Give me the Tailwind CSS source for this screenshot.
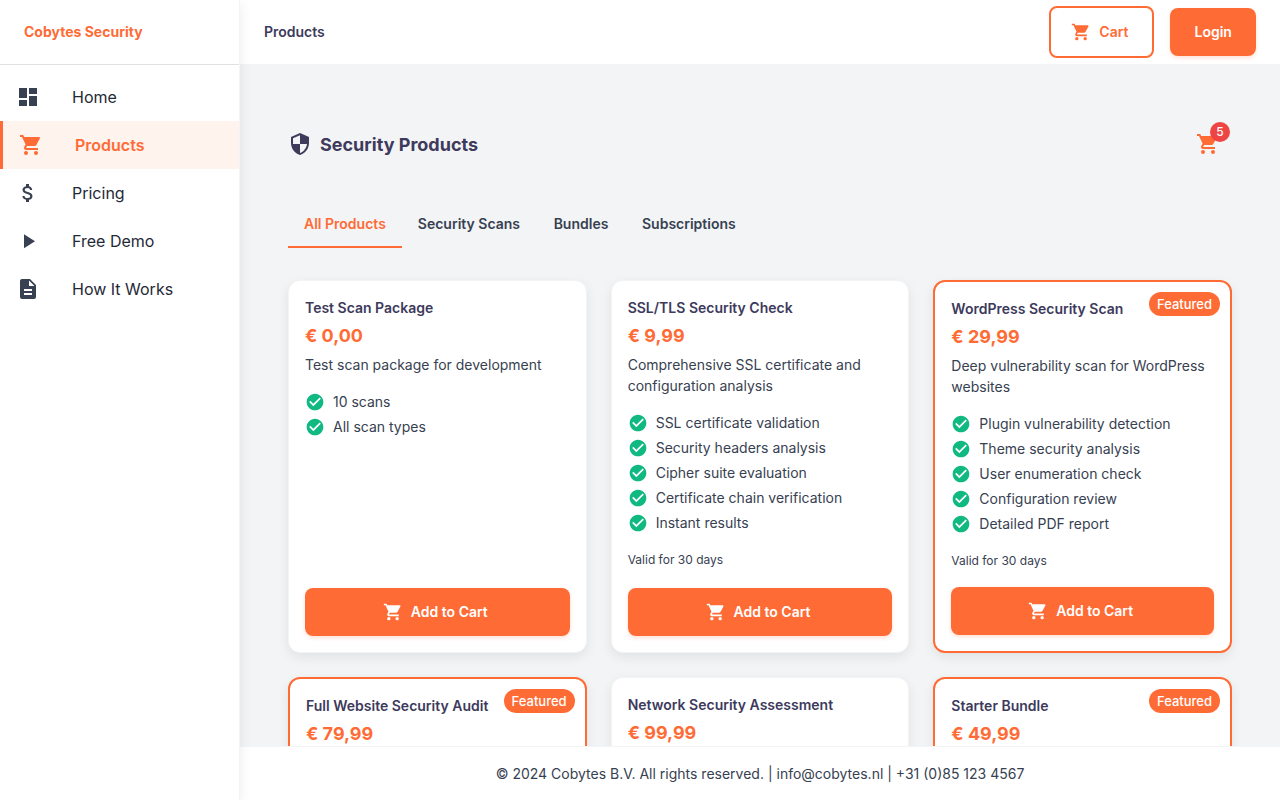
<!DOCTYPE html>
<html lang="en">
<head>
<meta charset="utf-8">
<title>Products - Cobytes Security</title>
<script src="https://cdn.jsdelivr.net/npm/@tailwindcss/browser@4"></script>
</head>
<body class="h-screen w-screen overflow-hidden bg-[#f3f4f6] font-[Inter,sans-serif] text-sm leading-[21px] text-[#374151] antialiased">
<svg class="hidden">
  <symbol id="cart" viewBox="0 0 24 24"><path d="M17 18c-1.11 0-2 .89-2 2a2 2 0 0 0 2 2 2 2 0 0 0 2-2 2 2 0 0 0-2-2M1 2v2h2l3.6 7.59-1.36 2.45c-.15.28-.24.61-.24.96a2 2 0 0 0 2 2h12v-2H7.42a.25.25 0 0 1-.25-.25c0-.05.01-.09.03-.12L8.1 13h7.45c.75 0 1.41-.42 1.75-1.03l3.58-6.47c.07-.16.12-.33.12-.5a1 1 0 0 0-1-1H5.21l-.94-2M7 18c-1.11 0-2 .89-2 2a2 2 0 0 0 2 2 2 2 0 0 0 2-2 2 2 0 0 0-2-2z"/></symbol>
  <symbol id="check" viewBox="0 0 24 24"><path d="M12 2C6.5 2 2 6.5 2 12s4.500 10 10 10 10-4.500 10-10S17.500 2 12 2m-2 15-5-5 1.410-1.410L10 14.170l7.590-7.590L19 8z"/></symbol>
</svg>
<div class="flex h-full">
  <aside class="relative z-10 flex w-60 shrink-0 flex-col border-r border-[#f3f4f6] bg-white shadow-[0_4px_12px_rgba(0,0,0,0.08)]">
    <div class="flex h-[65px] shrink-0 items-center border-b border-[#e0e0e0] px-6 leading-5 font-bold text-[#ff6b35]"><span class="-mt-px">Cobytes Security</span></div>
    <nav class="flex flex-col pt-2 text-base leading-6 text-[#1f2937]">
      <a class="flex h-12 items-center gap-8 px-4"><svg class="size-6 fill-[#374151]" viewBox="0 0 24 24"><path d="M13 3v6h8V3m-8 18h8V11h-8M3 21h8v-6H3m0-2h8V3H3z"/></svg>Home</a>
      <a class="flex h-12 items-center gap-8 border-l-3 border-[#ff6b35] bg-[#fff3ee] px-4 font-semibold text-[#ff6b35]"><svg class="size-6 fill-current"><use href="#cart"/></svg>Products</a>
      <a class="flex h-12 items-center gap-8 px-4"><svg class="size-6 fill-[#374151]" viewBox="0 0 24 24"><path d="M11.800 10.900c-2.270-.590-3-1.200-3-2.150 0-1.090 1.010-1.850 2.700-1.850 1.780 0 2.440.850 2.500 2.100h2.210c-.070-1.720-1.120-3.300-3.210-3.810V3h-3v2.160c-1.940.420-3.500 1.680-3.500 3.610 0 2.310 1.910 3.460 4.700 4.130 2.500.600 3 1.480 3 2.410 0 .690-.490 1.790-2.700 1.790-2.060 0-2.870-.920-2.980-2.100h-2.200c.120 2.190 1.760 3.420 3.680 3.830V21h3v-2.150c1.950-.370 3.500-1.500 3.500-3.550 0-2.840-2.430-3.810-4.700-4.400"/></svg>Pricing</a>
      <a class="flex h-12 items-center gap-8 px-4"><svg class="size-6 fill-[#374151]" viewBox="0 0 24 24"><path d="M8 5.140v14l11-7z"/></svg>Free Demo</a>
      <a class="flex h-12 items-center gap-8 px-4"><svg class="size-6 fill-[#374151]" viewBox="0 0 24 24"><path d="M13 9h5.500L13 3.500zM6 2h8l6 6v12a2 2 0 0 1-2 2H6a2 2 0 0 1-2-2V4c0-1.110.890-2 2-2m10 16v-2H8v2zm0-4v-2H8v2z"/></svg>How It Works</a>
    </nav>
  </aside>
  <div class="flex min-w-0 grow flex-col">
    <header class="flex h-16 shrink-0 items-center justify-between bg-white px-6 leading-5">
      <span class="font-semibold text-[#3d3a5c]">Products</span>
      <div class="flex items-center gap-4">
        <button class="flex h-[52px] w-[105px] items-center justify-center gap-2 rounded-lg border-2 border-[#ff6b35] pr-1 font-semibold text-[#ff6b35]"><svg class="size-5 fill-current"><use href="#cart"/></svg>Cart</button>
        <button class="h-12 w-[85.6px] rounded-lg bg-[#ff6b35] font-semibold text-white shadow-[0_2px_4px_rgba(255,107,53,0.2)]">Login</button>
      </div>
    </header>
    <main class="min-h-0 grow overflow-hidden px-12 pt-14">
      <div class="flex h-12 items-center justify-between">
        <h1 class="flex items-center gap-2 text-lg leading-6 font-bold text-[#3d3a5c]"><svg class="size-6 fill-current" viewBox="0 0 24 24"><path d="M12 1 3 5v6c0 5.550 3.840 10.740 9 12 5.160-1.260 9-6.450 9-12V5zm0 10.990h7c-.530 4.120-3.280 7.790-7 8.940V12H5V6.300l7-3.110z"/></svg><span class="pt-0.5">Security Products</span></h1>
        <div class="relative mr-3 size-6"><svg class="size-6 fill-[#ff6b35]"><use href="#cart"/></svg><span class="absolute -top-2.5 left-3.5 flex size-5 items-center justify-center rounded-full bg-[#ef4444] text-xs font-medium text-white">5</span></div>
      </div>
      <div class="mt-8 flex h-12 leading-5 font-semibold">
        <span class="flex min-w-[90px] items-center justify-center border-b-2 border-[#ff6b35] px-4 pt-0.5 text-[#ff6b35]">All Products</span>
        <span class="flex min-w-[90px] items-center justify-center px-4">Security Scans</span>
        <span class="flex min-w-[90px] items-center justify-center px-4">Bundles</span>
        <span class="flex min-w-[90px] items-center justify-center px-4">Subscriptions</span>
      </div>
      <div id="grid" class="mt-8 grid auto-rows-[372.6px] grid-cols-3 gap-6"></div>
    </main>
    <footer class="flex h-[54px] shrink-0 items-center justify-center border-t border-[#f3f4f6] bg-white">© 2024 Cobytes B.V. All rights reserved. | info@cobytes.nl | +31 (0)85 123 4567</footer>
  </div>
</div>
<script>
const products = [
  ["Test Scan Package", "0,00", "Test scan package for development", ["10 scans", "All scan types"], "", false],
  ["SSL/TLS Security Check", "9,99", "Comprehensive SSL certificate and configuration analysis", ["SSL certificate validation", "Security headers analysis", "Cipher suite evaluation", "Certificate chain verification", "Instant results"], "Valid for 30 days", false],
  ["WordPress Security Scan", "29,99", "Deep vulnerability scan for WordPress websites", ["Plugin vulnerability detection", "Theme security analysis", "User enumeration check", "Configuration review", "Detailed PDF report"], "Valid for 30 days", true],
  ["Full Website Security Audit", "79,99", "", [], "", true],
  ["Network Security Assessment", "99,99", "", [], "", false],
  ["Starter Bundle", "49,99", "", [], "", true],
];
const details = (desc, items, valid) => `
    <p class="mt-[5px]">${desc}</p>
    <ul class="mt-4 flex flex-col gap-1">${items.map(i => `<li class="flex items-center gap-2"><svg class="size-5 fill-[#10b981]"><use href="#check"/></svg>${i}</li>`).join("")}</ul>
    <div class="mt-[18px] text-xs leading-[18px]">${valid}</div>
    <button class="mt-auto flex h-12 w-full shrink-0 items-center justify-center gap-2 rounded-lg bg-[#ff6b35] pr-1 leading-5 font-semibold text-white shadow-[0_2px_4px_rgba(255,107,53,0.2)]"><svg class="size-5 fill-current"><use href="#cart"/></svg>Add to Cart</button>`;
document.getElementById("grid").innerHTML = products.map(([name, price, desc, items, valid, featured]) => `
  <article class="relative flex flex-col rounded-xl bg-white p-4 shadow-[0_4px_12px_rgba(0,0,0,0.08)] ${featured ? "border-2 border-[#ff6b35]" : "border border-[#f3f4f6]"}">
    ${featured ? '<span class="absolute top-2.5 right-2.5 flex h-6 items-center rounded-full bg-[#ff6b35] px-2 text-[13px] leading-5 font-medium text-white">Featured</span>' : ""}
    <h2 class="font-semibold text-[#3d3a5c]">${name}</h2>
    <div class="mt-1 text-lg leading-[27px] font-bold text-[#ff6b35]">€ ${price}</div>
    ${desc ? details(desc, items, valid) : ""}
  </article>`).join("");
</script>
</body>
</html>
